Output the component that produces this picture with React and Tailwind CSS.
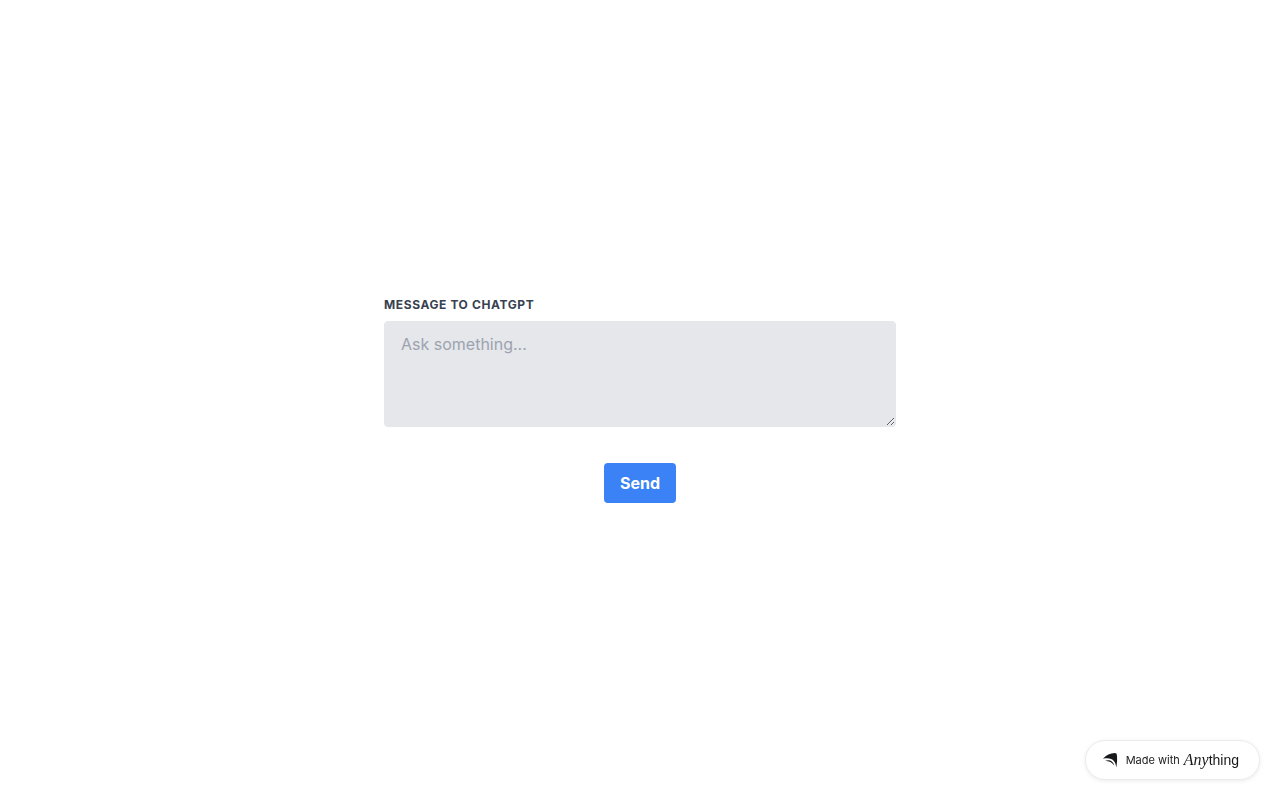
export default function App() {
  return (
    <main className="flex min-h-screen flex-col items-center justify-center bg-white font-['Inter',sans-serif]">
      <form className="flex w-full max-w-lg flex-col items-center" onSubmit={(e) => e.preventDefault()}>
        <label htmlFor="message" className="mb-2 block w-full text-xs font-bold tracking-wider text-[#374151] uppercase">
          Message to ChatGPT
        </label>
        <textarea
          id="message"
          rows={4}
          placeholder="Ask something..."
          className="mb-9 block w-full rounded border border-[#e5e7eb] bg-[#e5e7eb] px-4 py-3 text-base leading-tight text-[#374151] placeholder:text-[#9ca3af]"
        />
        <button type="submit" className="rounded bg-[#3b82f6] px-4 py-2 text-base font-bold text-white">
          Send
        </button>
      </form>
      <a href="#" className="fixed right-5 bottom-5 flex h-10 items-center rounded-full border border-[#ebebeb] bg-white pr-5 pl-4 text-[#18191b] shadow-[0_1px_4px_rgba(0,0,0,0.08)]">
        <svg viewBox="0 0 16 16" className="mr-2 size-4" fill="#18191b" aria-hidden="true">
          <path d="M1 6.8C4.3 3 8.2 1.1 12.8 1C14.2 1 14.7 1.8 14.9 3.2C15.4 7.2 15.1 11.3 14.2 15.4C13.7 9.6 10.6 4.8 1 6.8Z" />
          <path d="M3 8.8C7.6 7.2 11.4 9 12.1 13.6C10.2 10.7 7.2 8.9 3 8.8Z" />
        </svg>
        <span className="mr-1 text-[11px]">Made with</span>
        <span className="flex items-baseline"><i className="font-['Liberation_Serif',serif] text-base">Any</i><span className="font-['Liberation_Sans',sans-serif] text-sm">thing</span></span>
      </a>
    </main>
  );
}
